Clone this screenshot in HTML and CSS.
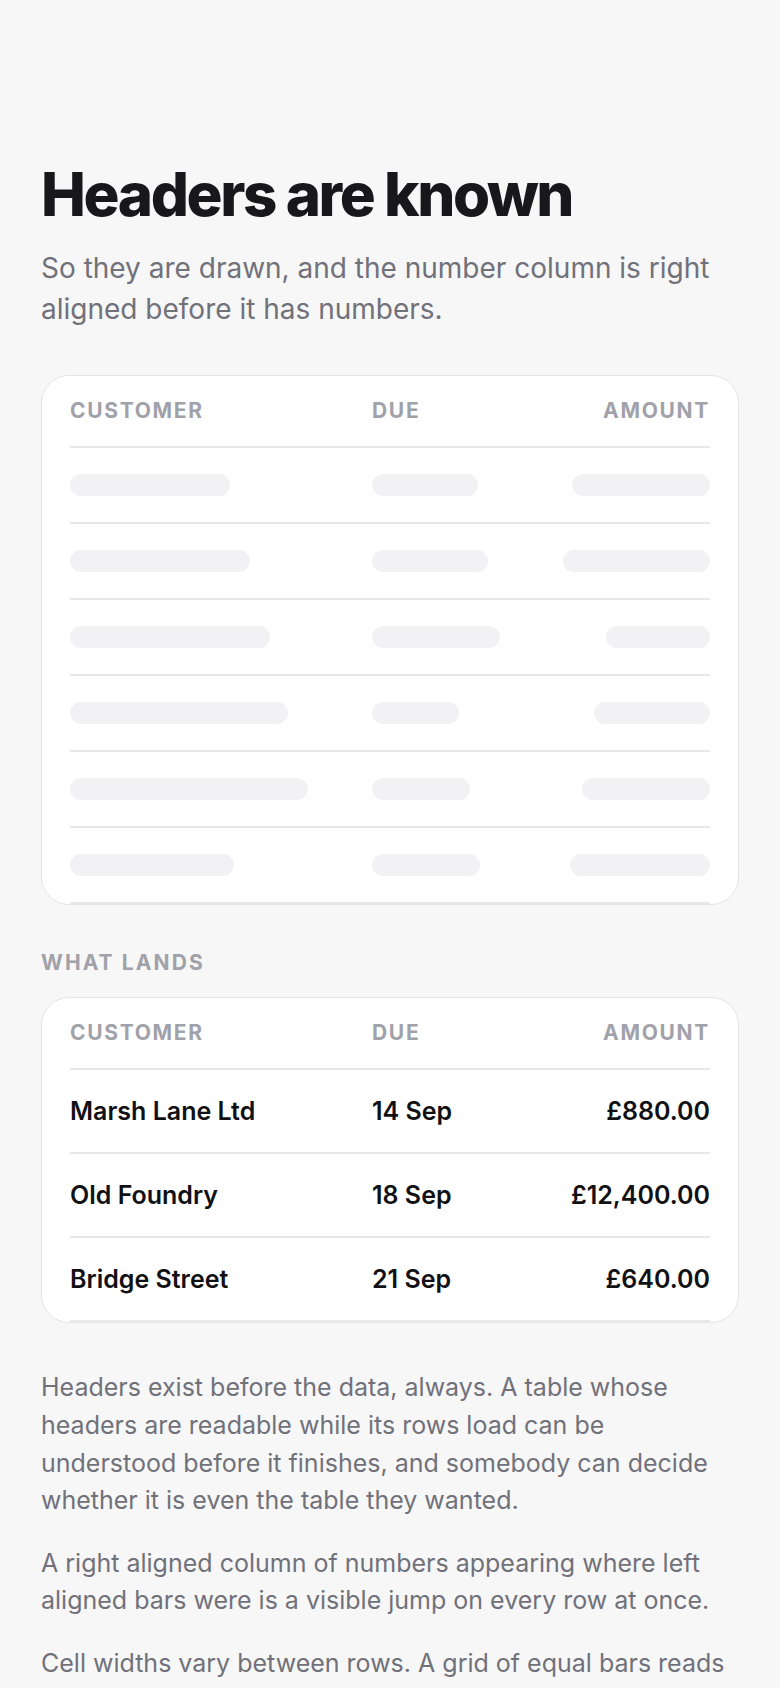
FILE: index.html
```html
<!DOCTYPE html>
<html lang="en">
<head>
<meta charset="utf-8">
<title>Headers are known</title>
<link rel="stylesheet" href="styles.css">
</head>
<body>
<main class="page">
  <h1 class="title">Headers are known</h1>
  <p class="lede">So they are drawn, and the number column is right aligned before it has numbers.</p>

  <section class="card">
    <div class="row head">
      <div class="cell">Customer</div>
      <div class="cell">Due</div>
      <div class="cell num">Amount</div>
    </div>
    <div class="row skel">
      <div class="cell"><span class="bar" style="width:160px"></span></div>
      <div class="cell"><span class="bar" style="width:106px"></span></div>
      <div class="cell num"><span class="bar" style="width:138px"></span></div>
    </div>
    <div class="row skel">
      <div class="cell"><span class="bar" style="width:180px"></span></div>
      <div class="cell"><span class="bar" style="width:116px"></span></div>
      <div class="cell num"><span class="bar" style="width:147px"></span></div>
    </div>
    <div class="row skel">
      <div class="cell"><span class="bar" style="width:200px"></span></div>
      <div class="cell"><span class="bar" style="width:128px"></span></div>
      <div class="cell num"><span class="bar" style="width:104px"></span></div>
    </div>
    <div class="row skel">
      <div class="cell"><span class="bar" style="width:218px"></span></div>
      <div class="cell"><span class="bar" style="width:87px"></span></div>
      <div class="cell num"><span class="bar" style="width:116px"></span></div>
    </div>
    <div class="row skel">
      <div class="cell"><span class="bar" style="width:238px"></span></div>
      <div class="cell"><span class="bar" style="width:98px"></span></div>
      <div class="cell num"><span class="bar" style="width:128px"></span></div>
    </div>
    <div class="row skel">
      <div class="cell"><span class="bar" style="width:164px"></span></div>
      <div class="cell"><span class="bar" style="width:108px"></span></div>
      <div class="cell num"><span class="bar" style="width:140px"></span></div>
    </div>
  </section>

  <h2 class="label">What lands</h2>

  <section class="card">
    <div class="row head">
      <div class="cell">Customer</div>
      <div class="cell">Due</div>
      <div class="cell num">Amount</div>
    </div>
    <div class="row data">
      <div class="cell">Marsh Lane Ltd</div>
      <div class="cell">14 Sep</div>
      <div class="cell num">£880.00</div>
    </div>
    <div class="row data">
      <div class="cell">Old Foundry</div>
      <div class="cell">18 Sep</div>
      <div class="cell num">£12,400.00</div>
    </div>
    <div class="row data">
      <div class="cell">Bridge Street</div>
      <div class="cell">21 Sep</div>
      <div class="cell num">£640.00</div>
    </div>
  </section>

  <div class="notes">
    <p>Headers exist before the data, always. A table whose headers are readable while its rows load can be understood before it finishes, and somebody can decide whether it is even the table they wanted.</p>
    <p>A right aligned column of numbers appearing where left aligned bars were is a visible jump on every row at once.</p>
    <p>Cell widths vary between rows. A grid of equal bars reads as a pattern rather than as data about to arrive.</p>
  </div>
</main>
</body>
</html>
```

FILE: styles.css
```css
* { box-sizing: border-box; }

html, body {
  margin: 0;
  padding: 0;
  background: #f7f7f8;
}

body {
  font-family: Inter, "Noto Sans", "Liberation Sans", sans-serif;
  color: #18181b;
}

.page {
  padding: 162px 41px 40px;
}

.title {
  margin: 0;
  font-size: 60px;
  line-height: 64px;
  font-weight: 800;
  letter-spacing: -0.04em;
  color: #18181b;
}

.lede {
  margin: 22px 0 45px;
  font-size: 28px;
  line-height: 41px;
  color: #71717a;
}

.card {
  background: #ffffff;
  border: 1px solid #e4e4e7;
  border-radius: 28px;
  padding: 0 28px;
}

.row {
  display: grid;
  grid-template-columns: 302px 1fr 1fr;
  align-items: center;
  border-bottom: 2px solid #e8e8eb;
}

.num {
  text-align: right;
  justify-self: end;
}

.head {
  padding: 23px 0;
  font-size: 21px;
  line-height: 24px;
  font-weight: 700;
  letter-spacing: 0.08em;
  text-transform: uppercase;
  color: #a1a1aa;
}

.skel {
  padding: 26px 0;
}

.skel .cell {
  display: flex;
}

.skel .num {
  justify-content: flex-end;
}

.bar {
  display: block;
  height: 22px;
  border-radius: 11px;
  background: #f2f2f4;
}

.label {
  margin: 46px 0 22px;
  font-size: 21px;
  line-height: 24px;
  font-weight: 700;
  letter-spacing: 0.1em;
  text-transform: uppercase;
  color: #a1a1aa;
}

.data {
  padding: 23px 0;
  font-size: 25px;
  line-height: 36px;
  font-weight: 600;
  color: #111113;
}

.notes {
  margin-top: 46px;
}

.notes p {
  margin: 0 0 24.5px;
  font-size: 25px;
  line-height: 37.8px;
  color: #71717a;
}
```
